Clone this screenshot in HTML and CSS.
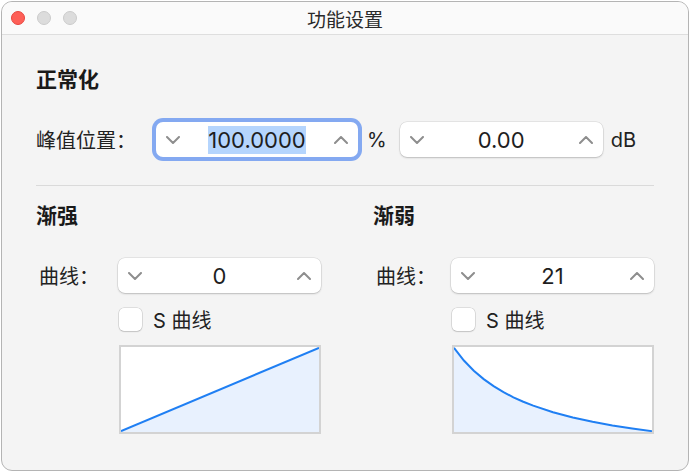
FILE: index.html
```html
<!DOCTYPE html>
<html lang="zh">
<head>
  <meta charset="UTF-8">
  <title>功能设置</title>
  <link rel="stylesheet" href="styles.css">
</head>
<body>
  <div class="window">
    <header class="titlebar">
      <div class="lights">
        <span class="light close"></span>
        <span class="light"></span>
        <span class="light"></span>
      </div>
      <div class="title">功能设置</div>
      <div></div>
    </header>

    <main class="content">
      <h2 class="heading">正常化</h2>
      <div class="field-row">
        <span class="label peak-label">峰值位置：</span>
        <div class="stepper focused">
          <svg class="chev" viewBox="0 0 14 8"><path d="M1 1 L7 7 L13 1"/></svg>
          <span class="value"><span class="sel">100.0000</span></span>
          <svg class="chev" viewBox="0 0 14 8"><path d="M1 7 L7 1 L13 7"/></svg>
        </div>
        <span class="unit pct">%</span>
        <div class="stepper">
          <svg class="chev" viewBox="0 0 14 8"><path d="M1 1 L7 7 L13 1"/></svg>
          <span class="value">0.00</span>
          <svg class="chev" viewBox="0 0 14 8"><path d="M1 7 L7 1 L13 7"/></svg>
        </div>
        <span class="unit db">dB</span>
      </div>

      <hr class="divider">

      <div class="fades">
        <section class="fade fade-in">
          <h2 class="heading">渐强</h2>
          <div class="field-row">
            <span class="label curve-label">曲线：</span>
            <div class="stepper">
              <svg class="chev" viewBox="0 0 14 8"><path d="M1 1 L7 7 L13 1"/></svg>
              <span class="value">0</span>
              <svg class="chev" viewBox="0 0 14 8"><path d="M1 7 L7 1 L13 7"/></svg>
            </div>
          </div>
          <label class="check"><span class="box"></span>S 曲线</label>
          <div class="graph">
            <svg viewBox="0 0 200 100" preserveAspectRatio="none">
              <polygon class="area" points="0,100 200,1 200,100"/>
              <polyline class="line" points="0,99 200,1"/>
            </svg>
          </div>
        </section>

        <section class="fade fade-out">
          <h2 class="heading">渐弱</h2>
          <div class="field-row">
            <span class="label curve-label">曲线：</span>
            <div class="stepper">
              <svg class="chev" viewBox="0 0 14 8"><path d="M1 1 L7 7 L13 1"/></svg>
              <span class="value">21</span>
              <svg class="chev" viewBox="0 0 14 8"><path d="M1 7 L7 1 L13 7"/></svg>
            </div>
          </div>
          <label class="check"><span class="box"></span>S 曲线</label>
          <div class="graph">
            <svg viewBox="0 0 200 100" preserveAspectRatio="none">
              <polygon class="area" points="0,1 10,15.9 20,27.9 30,37.8 40,46.1 50,53.1 60,59.2 70,64.4 80,69 100,76.8 120,83 140,88 160,92.3 180,95.9 200,99 200,100 0,100"/>
              <polyline class="line" points="0,1 10,15.9 20,27.9 30,37.8 40,46.1 50,53.1 60,59.2 70,64.4 80,69 100,76.8 120,83 140,88 160,92.3 180,95.9 200,99"/>
            </svg>
          </div>
        </section>
      </div>
    </main>
  </div>
</body>
</html>
```

FILE: styles.css
```css
* {
  box-sizing: border-box;
}
body {
  margin: 0;
  background: #ffffff;
  font-family: Inter, "Noto Sans CJK SC", sans-serif;
  color: #1e1e1e;
}
.window {
  margin: 1px;
  width: 688px;
  height: 470px;
  border: 1px solid #b4b4b4;
  border-radius: 11px;
  background: #f4f4f4;
  overflow: hidden;
}
.titlebar {
  display: grid;
  grid-template-columns: 1fr auto 1fr;
  align-items: center;
  height: 33px;
  background: #fafafa;
  border-bottom: 1px solid #dedede;
}
.lights {
  display: flex;
  gap: 12px;
  padding-left: 9px;
}
.light {
  width: 14px;
  height: 14px;
  border-radius: 50%;
  background: #dcdcdc;
  border: 1px solid #cbcbcb;
}
.light.close {
  background: #fe5f57;
  border-color: #e6463f;
}
.title {
  font-size: 19px;
  color: #2a2a2a;
}

.content {
  padding: 33px 34px 0;
}
.heading {
  margin: 0;
  font-size: 21px;
  line-height: 24px;
  font-weight: 700;
  color: #1a1a1a;
}
.field-row {
  display: flex;
  align-items: center;
  margin-top: 30px;
  height: 35px;
}
.label {
  font-size: 20px;
  color: #222222;
}
.peak-label {
  width: 120px;
}
.stepper {
  display: flex;
  align-items: center;
  width: 203px;
  height: 35px;
  padding: 0 10px;
  background: #ffffff;
  border-radius: 7px;
  box-shadow: 0 0 0 0.5px rgba(0, 0, 0, 0.12), 0 1px 2px rgba(0, 0, 0, 0.18);
}
.stepper.focused {
  width: 202px;
  box-shadow: 0 0 0 4px #84a9f1;
}
.chev {
  width: 14px;
  height: 8px;
  flex: none;
}
.chev path {
  fill: none;
  stroke: #8e8e8e;
  stroke-width: 2;
  stroke-linecap: round;
  stroke-linejoin: round;
}
.value {
  flex: 1;
  text-align: center;
  font-size: 22px;
  color: #1e1e1e;
}
.sel {
  background: #b5d5fd;
  padding: 1px 0;
}
.unit {
  font-size: 20px;
  color: #222222;
}
.pct {
  margin: 0 13px 0 9px;
}
.db {
  margin-left: 8px;
}
.divider {
  margin: 28px 0 0;
  border: none;
  border-top: 1px solid #dadada;
}

.fades {
  display: grid;
  grid-template-columns: 337px 1fr;
  padding-top: 18px;
}
.fade {
  --indent: 82px;
}
.fade-out {
  --indent: 78px;
}
.curve-label {
  width: var(--indent);
  padding-left: 3px;
}
.check {
  display: flex;
  align-items: center;
  gap: 11px;
  margin: 14px 0 0 calc(var(--indent) + 1px);
  height: 24px;
  font-size: 20px;
  color: #222222;
}
.box {
  width: 23px;
  height: 23px;
  background: #ffffff;
  border-radius: 5px;
  box-shadow: 0 0 0 0.5px rgba(0, 0, 0, 0.18), 0 1px 1.5px rgba(0, 0, 0, 0.12);
}
.graph {
  margin: 14px 0 0 calc(var(--indent) + 1px);
  width: 202px;
  height: 89px;
  border: 2px solid #d3d3d3;
  background: #ffffff;
}
.graph svg {
  display: block;
  width: 100%;
  height: 100%;
}
.area {
  fill: #e8f1fe;
}
.line {
  fill: none;
  stroke: #1f7ff3;
  stroke-width: 2;
  vector-effect: non-scaling-stroke;
}
```
